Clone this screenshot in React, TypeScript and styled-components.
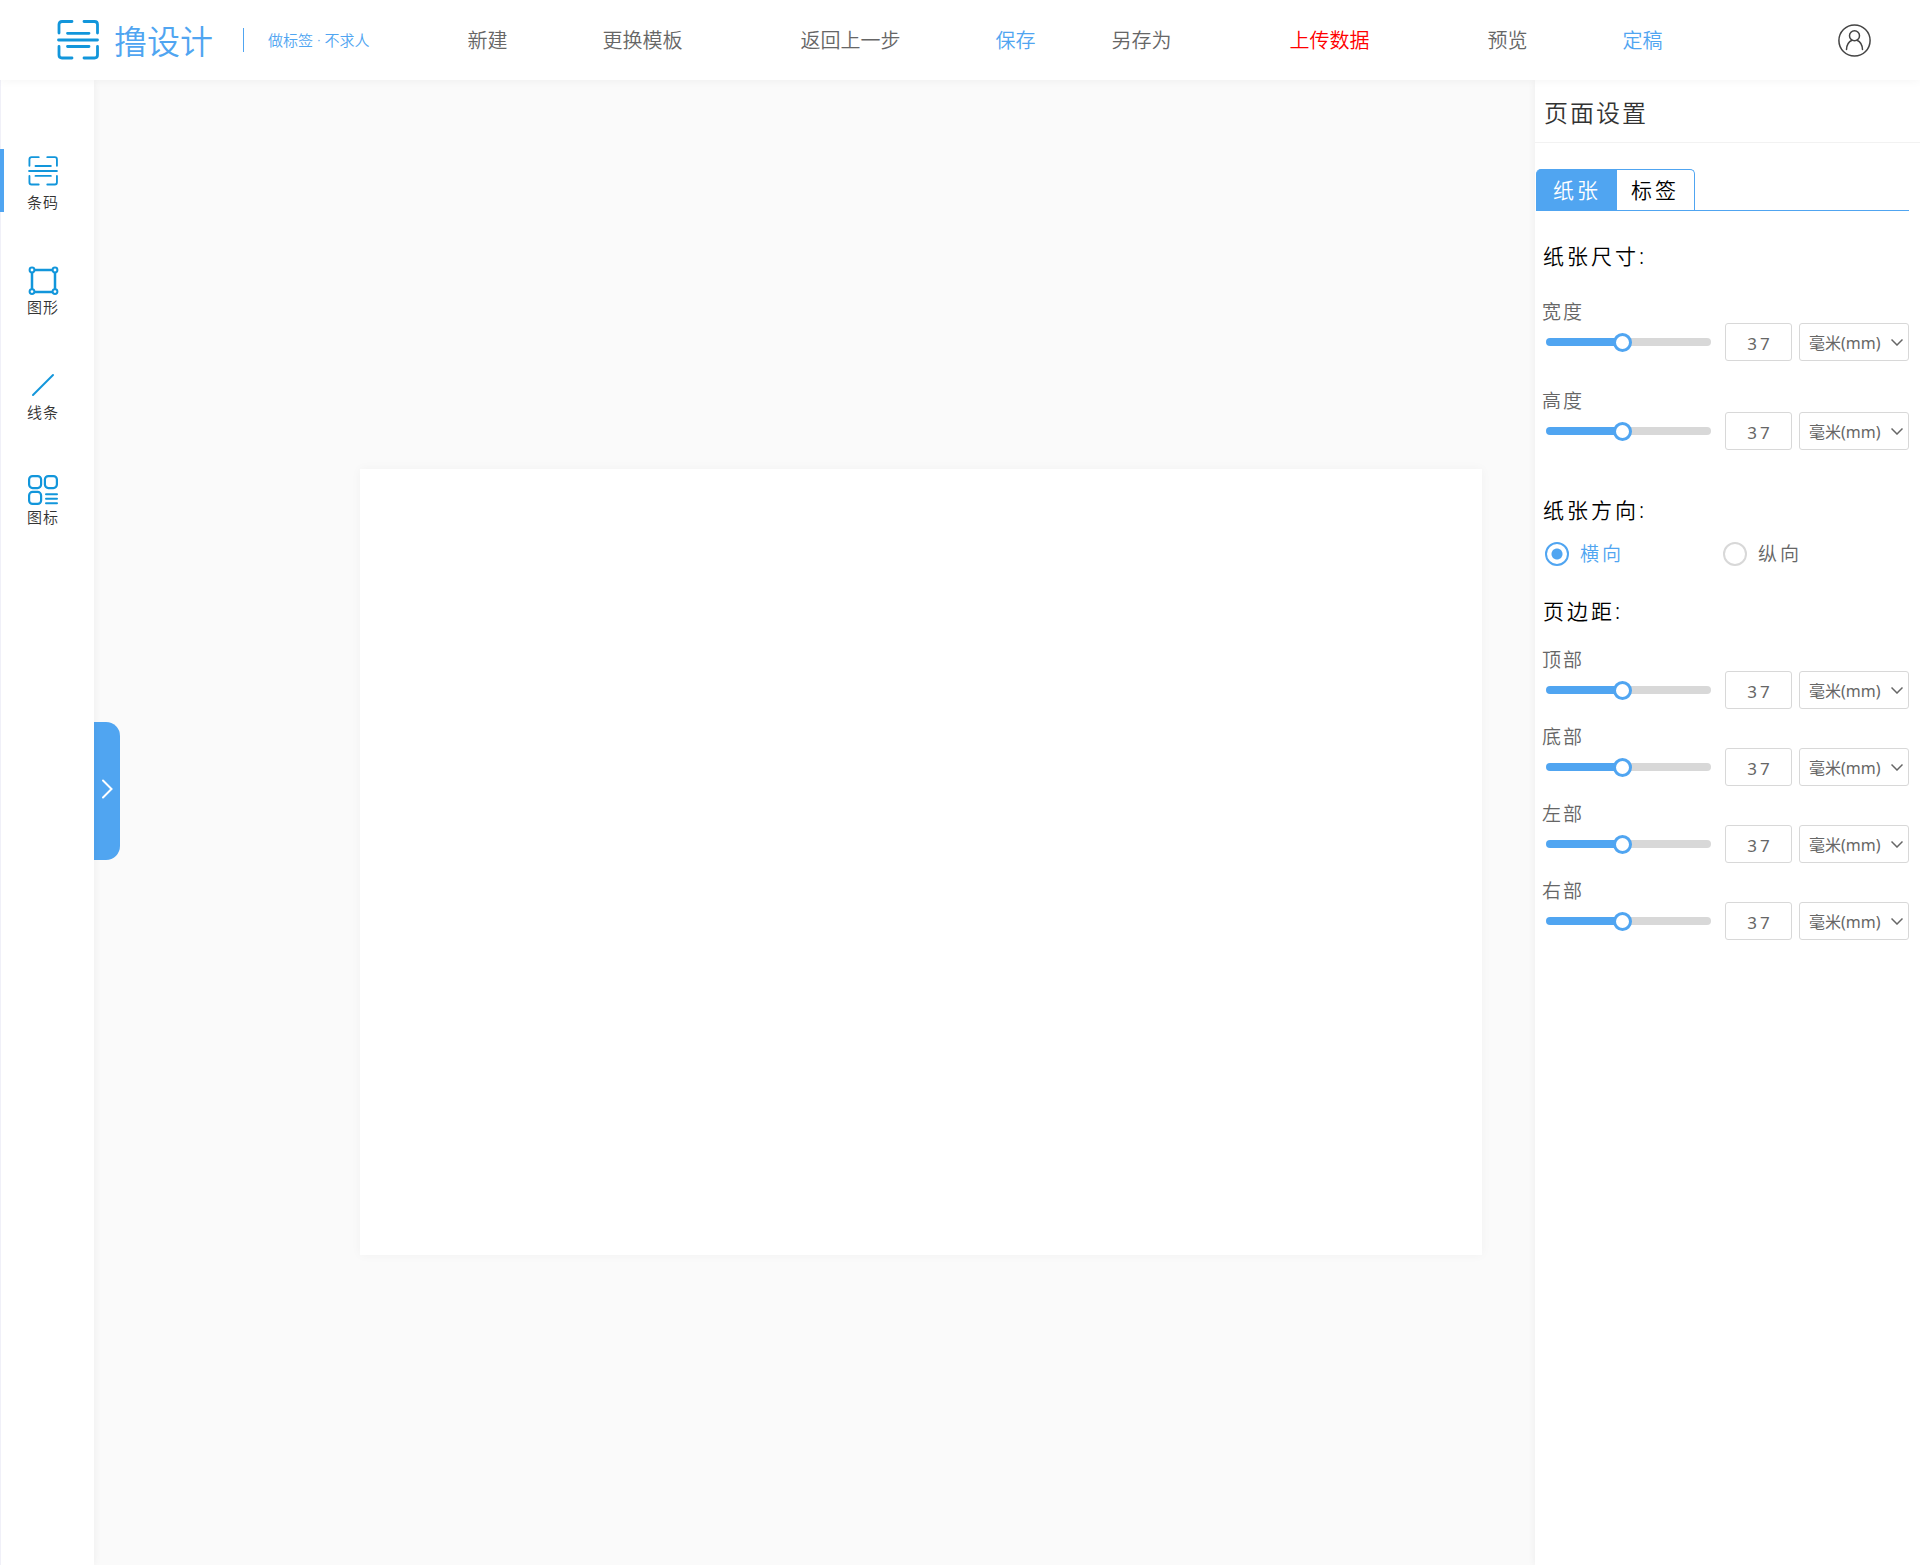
import React, { useId, useState } from 'react';
import styled, { createGlobalStyle, css } from 'styled-components';

const blue = '#50a5f1';
const iconBlue = '#1296db';
const grey = '#666';
const line = '#d8d8d8';

const GlobalStyle = createGlobalStyle`
  *, *::before, *::after { box-sizing: border-box; }
  body {
    margin: 0;
    background: #fafafa;
    font-family: "Noto Sans", "Noto Sans CJK SC", sans-serif;
    font-weight: 350;
    color: #000;
  }
  button, input, select { font: inherit; color: inherit; margin: 0; padding: 0; }
  button { border: 0; background: none; cursor: pointer; }
  h1, h2, p, fieldset, legend { margin: 0; padding: 0; border: 0; font-weight: inherit; }
`;

const Page = styled.div`
  display: flex;
  flex-direction: column;
  min-height: 100vh;
`;

const Header = styled.header`
  display: flex;
  align-items: center;
  height: 80px;
  padding: 0 49px 0 57px;
  background: #fff;
  box-shadow: 0 0 10px rgba(0, 0, 0, 0.05);
  z-index: 2;
  white-space: nowrap;
`;

const Brand = styled.a`
  display: flex;
  align-items: center;
  gap: 15px;
  color: ${blue};
  font-size: 33px;
  line-height: 40px;
  text-decoration: none;

  > span {
    padding-top: 3px;
  }
`;

const Tagline = styled.p`
  display: flex;
  align-items: center;
  margin-left: 30px;
  color: ${blue};
  font-size: 15px;
  line-height: 24px;

  &::before {
    content: "";
    width: 1px;
    height: 24px;
    margin-right: 24px;
    background: ${blue};
  }
`;

const Nav = styled.nav`
  display: flex;
  padding: 2px 0 0 3px;
`;

const spaces = { small: 76, medium: 95, large: 118 };
type Space = keyof typeof spaces;

const NavButton = styled.button<{ $space: Space; $color: string }>`
  margin-left: ${(p) => spaces[p.$space]}px;
  color: ${(p) => p.$color};
  font-size: 20px;
  line-height: 30px;
`;

const AvatarButton = styled.button`
  display: flex;
  margin-left: auto;
`;

const Body = styled.div`
  display: flex;
  flex: 1;
`;

const Sidebar = styled.aside`
  flex: none;
  display: flex;
  flex-direction: column;
  gap: 42px;
  width: 94px;
  padding-top: 69px;
  border-left: 1px solid #f0f0f8;
  background: #fff;
  box-shadow: 0 0 8px rgba(0, 0, 0, 0.06);
  z-index: 1;
`;

const Tool = styled.button<{ $active?: boolean }>`
  display: flex;
  flex-direction: column;
  align-items: center;
  justify-content: flex-end;
  gap: ${(p) => (p.$active ? 6 : 2)}px;
  height: 63px;
  margin-left: -1px;
  padding-right: 12px;
  border-left: 4px solid ${(p) => (p.$active ? blue : 'transparent')};
  color: #333;
  font-size: 15px;
  line-height: 20px;
  letter-spacing: 1px;
`;

const Workspace = styled.main`
  flex: 1;
  display: flex;
  align-items: flex-start;
  min-width: 0;
`;

const Handle = styled.button`
  flex: none;
  display: flex;
  align-items: center;
  justify-content: center;
  width: 26px;
  height: 138px;
  margin-top: 642px;
  padding-bottom: 4px;
  border-radius: 0 14px 14px 0;
  background: ${blue};
`;

const Paper = styled.section`
  flex: 1;
  margin: 389px 53px 0 240px;
  aspect-ratio: 1122 / 786;
  background: #fff;
  box-shadow: 0 0 10px rgba(0, 0, 0, 0.04);
`;

const Panel = styled.aside`
  flex: none;
  width: 385px;
  background: #fff;
  box-shadow: 0 0 8px rgba(0, 0, 0, 0.06);
  z-index: 1;
`;

const PanelTitle = styled.h1`
  height: 63px;
  padding-left: 9px;
  border-bottom: 1px solid #f2f2f2;
  color: #333;
  font-size: 24px;
  line-height: 66px;
  letter-spacing: 2px;
`;

const PanelContent = styled.div`
  padding: 26px 11px 40px 1px;
`;

const Tabs = styled.div`
  display: flex;
  border-bottom: 1px solid ${blue};
`;

const Tab = styled.button<{ $active?: boolean }>`
  height: 41px;
  padding: 0 15px 0 16px;
  border: 1px solid ${blue};
  border-bottom: 0;
  font-size: 21px;
  line-height: 36px;
  letter-spacing: 3px;
  ${(p) =>
    p.$active
      ? css`
          border-radius: 5px 0 0 0;
          background: ${blue};
          color: #fff;
        `
      : css`
          border-left: 0;
          border-radius: 0 5px 0 0;
          padding-left: 14px;
        `}
`;

const Group = styled.fieldset<{ $before: number; $gap: number; $rows: number }>`
  min-width: 0;
  margin-top: ${(p) => p.$before}px;
  padding-left: 6px;

  > legend {
    margin-bottom: ${(p) => p.$gap}px;
    padding-left: 1px;
    font-size: 21px;
    line-height: 28px;
    letter-spacing: 3px;
  }

  > div + div {
    margin-top: ${(p) => p.$rows}px;
  }
`;

const Row = styled.div`
  display: grid;
  grid-template-columns: 1fr 67px 110px;
  grid-template-rows: 22px 38px;
  column-gap: 7px;
  align-items: center;
`;

const RowLabel = styled.label`
  grid-column: 1 / -1;
  color: ${grey};
  font-size: 19px;
  line-height: 22px;
  letter-spacing: 2px;
`;

const Slider = styled.input`
  appearance: none;
  justify-self: stretch;
  min-width: 0;
  height: 8px;
  margin: 0 7px 0 4px;
  border-radius: 4px;
  outline: none;
  cursor: pointer;

  &::-webkit-slider-thumb {
    appearance: none;
    width: 19px;
    height: 19px;
    border: 3px solid ${blue};
    border-radius: 50%;
    background: #fff;
  }
`;

const field = css`
  width: 100%;
  height: 38px;
  padding-top: 2px;
  border: 1px solid ${line};
  border-radius: 3px;
  background: #fff;
  color: ${grey};
  font-weight: 400;
`;

const NumberBox = styled.input`
  ${field}
  padding-left: 3px;
  text-align: center;
  font-size: 17px;
  letter-spacing: 3px;
`;

const SelectWrap = styled.div`
  display: grid;
  grid-template-columns: 1fr 18px;
  align-items: center;

  > * {
    grid-row: 1;
  }
  > svg {
    grid-column: 2;
    pointer-events: none;
  }
`;

const UnitSelect = styled.select`
  ${field}
  appearance: none;
  grid-column: 1 / -1;
  padding-left: 9px;
  font-size: 16px;
`;

const Choices = styled.div`
  display: grid;
  grid-template-columns: 178px 1fr;
  padding-left: 3px;
`;

const Choice = styled.label`
  display: flex;
  align-items: center;
  gap: 11px;
  color: ${grey};
  font-size: 19px;
  line-height: 24px;
  letter-spacing: 3px;

  &:has(:checked) {
    color: ${blue};
  }
`;

const Radio = styled.input`
  appearance: none;
  width: 24px;
  height: 24px;
  border: 2px solid ${line};
  border-radius: 50%;
  background: #fff;

  &:checked {
    border-color: ${blue};
    background: radial-gradient(circle, ${blue} 5px, #fff 6px);
  }
`;

function ScanIcon({ width, height, stroke }: { width: number; height: number; stroke: number }) {
  return (
    <svg width={width} height={height} viewBox="0 0 42 40" preserveAspectRatio="none" fill="none" stroke={iconBlue} strokeWidth={stroke} strokeLinecap="round" aria-hidden="true">
      <path d="M2 13V4.5Q2 1.5 5 1.5H15M27 1.5H37.5Q40.5 1.5 40.5 4.5V13M2 26.500V35Q2 38 5 38H15M27 38H37.500Q40.500 38 40.500 35V26.500" />
      <path d="M10.500 13.300H32M1.500 20H40.500M10.500 26.500H32" />
    </svg>
  );
}

function ShapeIcon() {
  return (
    <svg width="31" height="30" viewBox="0 0 31 30" fill="none" stroke={iconBlue} aria-hidden="true">
      <path d="M4 5H27V27H4Z" strokeWidth="2.500" />
      <g fill="#fff" strokeWidth="2">
        <circle cx="4" cy="5" r="2.400" />
        <circle cx="27" cy="5" r="2.400" />
        <circle cx="4" cy="26.600" r="2.400" />
        <circle cx="27" cy="26.600" r="2.400" />
      </g>
    </svg>
  );
}

function LineIcon() {
  return (
    <svg width="30" height="30" viewBox="0 0 30 30" fill="none" stroke={iconBlue} strokeWidth="2" strokeLinecap="round" aria-hidden="true">
      <path d="M5 25L25 5" />
    </svg>
  );
}

function GridIcon() {
  return (
    <svg width="30" height="30" viewBox="0 0 30 30" fill="none" stroke={iconBlue} strokeWidth="2.200" strokeLinecap="round" aria-hidden="true">
      <rect x="1.100" y="1.100" width="12" height="12" rx="3.500" />
      <rect x="16.900" y="1.100" width="12" height="12" rx="3.500" />
      <rect x="1.100" y="16.900" width="12" height="12" rx="3.500" />
      <path strokeWidth="2" d="M18 19.200H29M18 23.700H29M18 28.200H29" />
    </svg>
  );
}

function AvatarIcon() {
  return (
    <svg width="33" height="33" viewBox="0 0 33 33" fill="none" stroke="#444" strokeWidth="1.500" strokeLinecap="round" aria-hidden="true">
      <circle cx="16.500" cy="16.500" r="15.600" />
      <circle cx="16.500" cy="11.800" r="5" />
      <path d="M8.500 25.500C8.700 20.500 11 17.500 14 16.200M24.500 25.500C24.300 20.500 22 17.500 19 16.200" />
    </svg>
  );
}

function Chevron() {
  return (
    <svg width="12" height="8" viewBox="0 0 12 8" fill="none" stroke="#666" strokeWidth="1.500" aria-hidden="true">
      <path d="M0.500 1.500L6 7L11.500 1.500" />
    </svg>
  );
}

const MAX = 81;

function MeasureRow({ label }: { label: string }) {
  const id = useId();
  const [value, setValue] = useState(37);
  const fill = (value / MAX) * 100;
  const change = (e: React.ChangeEvent<HTMLInputElement>) => setValue(Number(e.target.value) || 0);
  return (
    <Row>
      <RowLabel htmlFor={id}>{label}</RowLabel>
      <Slider
        id={id}
        type="range"
        min={0}
        max={MAX}
        value={value}
        onChange={change}
        style={{ background: `linear-gradient(to right, ${blue} ${fill}%, ${line} ${fill}%)` }}
      />
      <NumberBox type="text" inputMode="numeric" aria-label={label} value={value} onChange={change} />
      <SelectWrap>
        <UnitSelect aria-label={label}>
          <option>毫米(mm)</option>
        </UnitSelect>
        <Chevron />
      </SelectWrap>
    </Row>
  );
}

const navItems: { text: string; space: Space; color: string }[] = [
  { text: '新建', space: 'medium', color: grey },
  { text: '更换模板', space: 'medium', color: grey },
  { text: '返回上一步', space: 'large', color: grey },
  { text: '保存', space: 'medium', color: blue },
  { text: '另存为', space: 'small', color: grey },
  { text: '上传数据', space: 'large', color: '#f00' },
  { text: '预览', space: 'large', color: grey },
  { text: '定稿', space: 'medium', color: blue },
];

const tools = [
  { text: '条码', icon: <ScanIcon width={30} height={30} stroke={2.600} /> },
  { text: '图形', icon: <ShapeIcon /> },
  { text: '线条', icon: <LineIcon /> },
  { text: '图标', icon: <GridIcon /> },
];

export default function App() {
  const [direction, setDirection] = useState('横向');
  return (
    <Page>
      <GlobalStyle />
      <Header>
        <Brand href="#">
          <ScanIcon width={42} height={40} stroke={2.800} />
          <span>撸设计</span>
        </Brand>
        <Tagline>做标签 · 不求人</Tagline>
        <Nav>
          {navItems.map((item) => (
            <NavButton key={item.text} $space={item.space} $color={item.color}>
              {item.text}
            </NavButton>
          ))}
        </Nav>
        <AvatarButton aria-label="用户">
          <AvatarIcon />
        </AvatarButton>
      </Header>
      <Body>
        <Sidebar>
          {tools.map((tool, i) => (
            <Tool key={tool.text} $active={i === 0}>
              {tool.icon}
              {tool.text}
            </Tool>
          ))}
        </Sidebar>
        <Workspace>
          <Handle aria-label="展开">
            <svg width="12" height="20" viewBox="0 0 12 20" fill="none" stroke="#fff" strokeWidth="2" strokeLinecap="round" aria-hidden="true">
              <path d="M2 1.500L10.500 10L2 18.500" />
            </svg>
          </Handle>
          <Paper />
        </Workspace>
        <Panel>
          <PanelTitle>页面设置</PanelTitle>
          <PanelContent>
            <Tabs role="tablist">
              <Tab role="tab" aria-selected="true" $active>
                纸张
              </Tab>
              <Tab role="tab" aria-selected="false">
                标签
              </Tab>
            </Tabs>
            <Group $before={31} $gap={31} $rows={29}>
              <legend>纸张尺寸:</legend>
              <MeasureRow label="宽度" />
              <MeasureRow label="高度" />
            </Group>
            <Group $before={46} $gap={18} $rows={0}>
              <legend>纸张方向:</legend>
              <Choices>
                {['横向', '纵向'].map((d) => (
                  <Choice key={d}>
                    <Radio type="radio" name="direction" checked={direction === d} onChange={() => setDirection(d)} />
                    {d}
                  </Choice>
                ))}
              </Choices>
            </Group>
            <Group $before={31} $gap={24} $rows={17}>
              <legend>页边距:</legend>
              {['顶部', '底部', '左部', '右部'].map((label) => (
                <MeasureRow key={label} label={label} />
              ))}
            </Group>
          </PanelContent>
        </Panel>
      </Body>
    </Page>
  );
}
